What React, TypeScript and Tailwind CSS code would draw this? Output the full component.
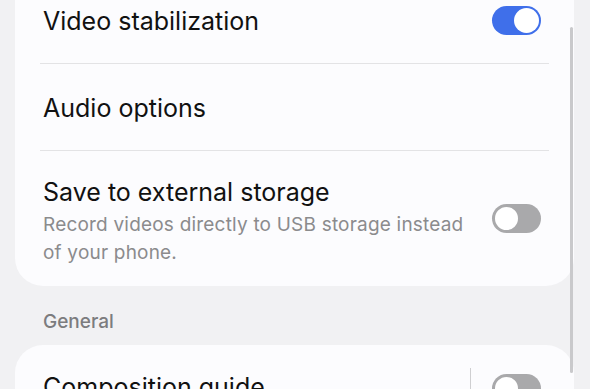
import React from "react";

function Toggle({ on, className = "" }: { on: boolean; className?: string }) {
  return on ? (
    <div className={"w-[49px] h-[29px] rounded-full bg-[#3f6fea] flex items-center justify-end pr-[2px] shrink-0 " + className}>
      <div className="w-[25px] h-[25px] rounded-full bg-white" />
    </div>
  ) : (
    <div className={"w-[49px] h-[29px] rounded-full bg-[#a9a9ab] flex items-center justify-start pl-[1px] shrink-0 " + className}>
      <div className="w-[27px] h-[27px] rounded-full bg-white border-[2px] border-[#a9a9ab]" />
    </div>
  );
}

export default function App() {
  return (
    <div
      className="relative w-[590px] h-[389px] overflow-hidden bg-[#f1f1f3]"
      style={{ fontFamily: "Inter, Roboto, 'Noto Sans', sans-serif" }}
    >
      <div className="mt-[-23px] pl-[15px] pr-[16px]">
        <div className="bg-[#fcfcfe] rounded-b-[28px]">
          <div className="flex items-center justify-between h-[86px] pl-[28px] pr-[33px]">
            <span className="text-[25px] text-[#111] pt-[3px]">Video stabilization</span>
            <Toggle on />
          </div>
          <div className="mx-[25px] h-[1px] bg-[#e3e3e5]" />
          <div className="flex items-center h-[86px] pl-[28px] pr-[33px]">
            <span className="text-[25px] text-[#111] pt-[3px]">Audio options</span>
          </div>
          <div className="mx-[25px] h-[1px] bg-[#e3e3e5]" />
          <div className="flex items-center justify-between pl-[28px] pr-[33px] pt-[26px] pb-[19px]">
            <div className="flex flex-col">
              <span className="text-[25px] leading-[30px] text-[#111]">Save to external storage</span>
              <span className="text-[19px] leading-[28px] text-[#8b8b8d] w-[432px] mt-[4px] tracking-[0.2px]">
                Record videos directly to USB storage instead of your phone.
              </span>
            </div>
            <Toggle on={false} className="mb-[8px]" />
          </div>
        </div>
        <div className="pl-[28px] pt-[24px] pb-[11px] text-[19px] leading-[24px] font-medium text-[#7c7c7e]">General</div>
        <div className="bg-[#fcfcfe] rounded-t-[28px] h-[80px]">
          <div className="flex items-center justify-between pl-[28px] pr-[33px] pt-[23px]">
            <span className="text-[25px] text-[#111]">Composition guide</span>
            <div className="flex items-center gap-[21px]">
              <div className="w-[1px] h-[40px] bg-[#cfcfd1]" />
              <Toggle on={false} />
            </div>
          </div>
        </div>
      </div>
      <div className="absolute left-[570px] top-[27px] w-[3px] h-[346px] rounded-full bg-[#c9c9cb]" />
    </div>
  );
}
